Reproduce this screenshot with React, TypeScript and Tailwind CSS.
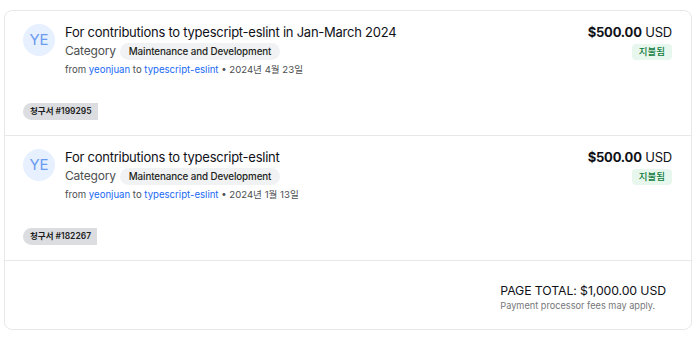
import React from 'react';

type Expense = {
  title: string;
  date: string;
  invoice: string;
};

const expenses: Expense[] = [
  { title: 'For contributions to typescript-eslint in Jan-March 2024', date: '2024년 4월 23일', invoice: '#199295' },
  { title: 'For contributions to typescript-eslint', date: '2024년 1월 13일', invoice: '#182267' },
];

const font = { fontFamily: 'Inter, "Noto Sans CJK KR", sans-serif' };

const ExpenseRow = ({ item, last }: { item: Expense; last?: boolean }) => (
  <div className={`flex h-[125px] flex-col justify-between pl-[18px] pr-[19px] pt-[11px] pb-[15px] ${last ? '' : 'border-b border-[#e8e8eb]'}`}>
    <div className="flex items-start">
      <div className="mt-[2px] flex h-8 w-8 shrink-0 items-center justify-center rounded-full bg-[#e6f0ff] text-[15px] text-[#6b9bf0]">
        YE
      </div>
      <div className="ml-[10px] flex flex-1 flex-col">
        <div className="text-[13px] leading-[20px] tracking-[-0.25px] text-[#0f1117]">{item.title}</div>
        <div className="flex items-center text-[12px] leading-[18px] tracking-[-0.2px] text-[#4d4f51]">
          <span>Category</span>
          <span className="ml-1 rounded-full bg-[#f1f2f3] px-[9px] py-px text-[9.8px] font-medium leading-[15px] tracking-[-0.1px] text-[#1c1e21]">
            Maintenance and Development
          </span>
        </div>
        <div className="mt-[2px] text-[9.6px] leading-[15px] text-[#4d4f51]">
          from <span className="text-[#1869f5]">yeonjuan</span> to <span className="text-[#1869f5]">typescript-eslint</span> • {item.date}
        </div>
      </div>
      <div className="flex flex-col items-end">
        <div className="text-[13px] leading-[20px] tracking-[-0.2px] text-[#0f1117]">
          <span className="font-bold">$500.00</span> USD
        </div>
        <span className="mt-[2px] rounded bg-[#e8f7ee] px-[7px] py-px text-[9.5px] font-medium leading-[14px] text-[#0e7a3c]">
          지불됨
        </span>
      </div>
    </div>
    <div className="flex">
      <span className="flex h-[17px] items-center rounded-l-full rounded-r-sm bg-[#dcdde0] pl-[7px] pr-[6px] text-[8.5px] font-semibold text-[#1c1e21]">
        청구서 {item.invoice}
      </span>
    </div>
  </div>
);

export default function App() {
  return (
    <div className="min-h-[341px] bg-white px-1 pt-[10px]" style={font}>
      <div className="w-[688px] rounded-lg border border-[#e8e8eb] bg-white">
        {expenses.map((e) => (
          <ExpenseRow key={e.invoice} item={e} />
        ))}
        <div className="flex h-[68px] flex-col items-end justify-center pt-[4px] pr-[25px]">
          <div className="whitespace-nowrap">
            <div className="text-[12.3px] leading-[17px] tracking-[-0.1px] text-[#0f1117]">PAGE TOTAL: $1,000.00 USD</div>
            <div className="text-[9.2px] leading-[14px] text-[#75777a]">Payment processor fees may apply.</div>
          </div>
        </div>
      </div>
    </div>
  );
}
